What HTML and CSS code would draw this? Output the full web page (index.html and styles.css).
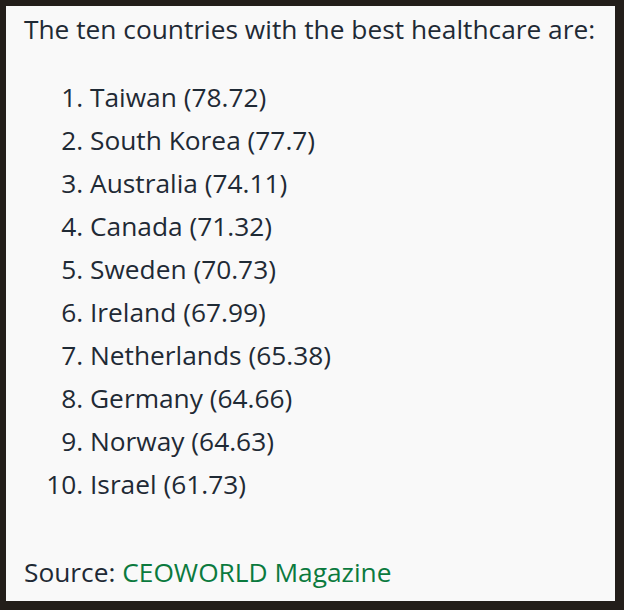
FILE: index.html
```html
<!DOCTYPE html>
<html lang="en">
<head>
    <meta charset="UTF-8">
    <title>Best healthcare</title>
    <link rel="stylesheet" href="styles.css">
</head>
<body>
    <div class="card">
        <p class="intro">The ten countries with the best healthcare are:</p>

        <!-- Ranking -->
        <ol class="ranking">
            <li>Taiwan (78.72)</li>
            <li>South Korea (77.7)</li>
            <li>Australia (74.11)</li>
            <li>Canada (71.32)</li>
            <li>Sweden (70.73)</li>
            <li>Ireland (67.99)</li>
            <li>Netherlands (65.38)</li>
            <li>Germany (64.66)</li>
            <li>Norway (64.63)</li>
            <li>Israel (61.73)</li>
        </ol>

        <p class="source">Source: <a href="#" class="link">CEOWORLD Magazine</a></p>
    </div>
</body>
</html>
```

FILE: styles.css
```css
body {
    margin: 0;
    padding: 6px 9px 9px 6px;
    background: #231e1a;
    font-family: "Open Sans", sans-serif;
    font-size: 26.3px;
    line-height: 43px;
    color: #1f2a35;
}
.card {
    background: #f9f9f9;
    height: 595px;
    box-sizing: border-box;
    padding: 2px 18px 0 18px;
}
.intro {
    margin: 0;
}
.ranking {
    margin: 25px 0 0 0;
    padding-left: 66px;
}
.source {
    margin: 45px 0 0 0;
}
.link {
    color: #0b7a3e;
    text-decoration: none;
}
```
